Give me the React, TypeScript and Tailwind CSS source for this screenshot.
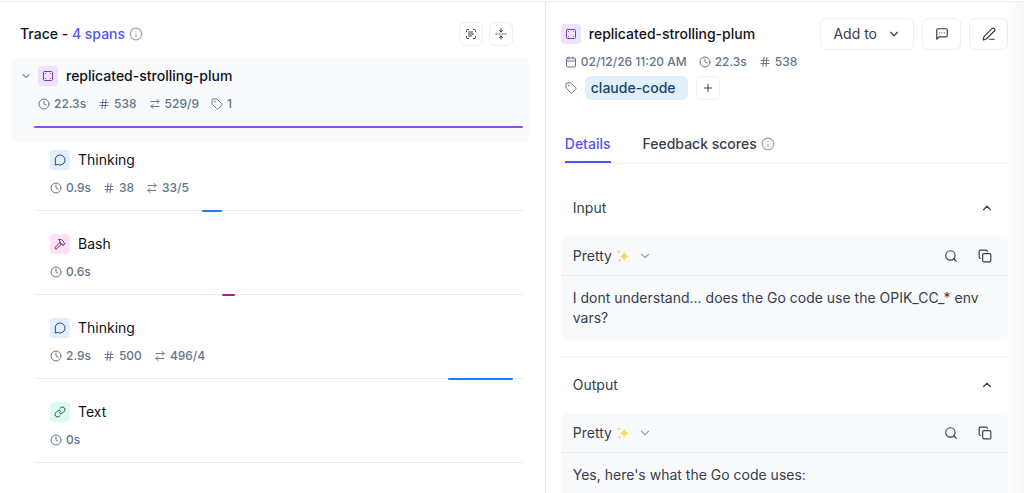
import React from 'react';
import {
    ArrowRightLeft,
    Calendar,
    ChevronDown,
    ChevronUp,
    Clock,
    Copy,
    FoldVertical,
    Hammer,
    Hash,
    Info,
    InspectionPanel,
    Link,
    LucideIcon,
    MessageCircle,
    PenLine,
    Plus,
    ScanText,
    Search,
    Tag,
} from 'lucide-react';

type SpanType = 'trace' | 'thinking' | 'tool' | 'text';

interface Span {
    id: number;
    name: string;
    type: SpanType;
    duration: string;
    tokens?: string;
    usage?: string;
    tags?: string;
    // position on the timeline, in percent
    start: number;
    width: number;
}

const SPANS: Span[] = [
    { id: 1, name: 'replicated-strolling-plum', type: 'trace', duration: '22.3s', tokens: '538', usage: '529/9', tags: '1', start: 0, width: 100 },
    { id: 2, name: 'Thinking', type: 'thinking', duration: '0.9s', tokens: '38', usage: '33/5', start: 34.4, width: 4.1 },
    { id: 3, name: 'Bash', type: 'tool', duration: '0.6s', start: 38.5, width: 2.6 },
    { id: 4, name: 'Thinking', type: 'thinking', duration: '2.9s', tokens: '500', usage: '496/4', start: 84.8, width: 13.2 },
    { id: 5, name: 'Text', type: 'text', duration: '0s', start: 0, width: 0 },
];

const TYPE_STYLES: Record<SpanType, { icon: LucideIcon; chip: string; bar: string }> = {
    trace: { icon: InspectionPanel, chip: 'bg-[#efe2fd] text-[#6d3fb0]', bar: 'bg-[#8b4ff5]' },
    thinking: { icon: MessageCircle, chip: 'bg-[#e2effd] text-[#1e4482]', bar: 'bg-[#1a80f0]' },
    tool: { icon: Hammer, chip: 'bg-[#fde2f6] text-[#72275b]', bar: 'bg-[#bf0fa0]' },
    text: { icon: Link, chip: 'bg-[#dafbf0] text-[#295747]', bar: 'bg-[#12a678]' },
};

const TypeChip: React.FC<{ type: SpanType }> = ({ type }) => {
    const { icon: Icon, chip } = TYPE_STYLES[type];
    return (
        <span className={`flex size-5 shrink-0 items-center justify-center rounded ${chip}`}>
            <Icon className="size-3" />
        </span>
    );
};

const Meta: React.FC<{ icon: LucideIcon; children: React.ReactNode }> = ({ icon: Icon, children }) => (
    <span className="flex items-center gap-1 whitespace-nowrap text-xs leading-4 font-medium text-[#64748b]">
        <Icon className="size-3 shrink-0" />
        {children}
    </span>
);

const SpanRow: React.FC<{ span: Span }> = ({ span }) => {
    const isRoot = span.type === 'trace';
    return (
        <li className={`rounded-md pt-2 pr-1.5 pb-3.5 ${isRoot ? 'bg-[#f8fafc]' : ''}`}>
            <div className={`flex h-5 items-center ${isRoot ? 'pl-2' : 'pl-[38px]'}`}>
                {isRoot && (
                    <button aria-label="Collapse" className="mr-1.5 flex w-3 text-[#373d4d]">
                        <ChevronDown className="size-3" />
                    </button>
                )}
                <TypeChip type={span.type} />
                <span className={`ml-2 text-sm text-[#111318] ${isRoot ? 'font-medium' : ''}`}>{span.name}</span>
            </div>
            <div className={`mt-2.5 flex h-4 items-center gap-3 ${isRoot ? 'pl-[26px]' : 'pl-[38px]'}`}>
                <Meta icon={Clock}>{span.duration}</Meta>
                {span.tokens && <Meta icon={Hash}>{span.tokens}</Meta>}
                {span.usage && <Meta icon={ArrowRightLeft}>{span.usage}</Meta>}
                {span.tags && <Meta icon={Tag}>{span.tags}</Meta>}
            </div>
            <div className="mt-3.5 ml-[22px] h-0.5 border-t border-[#e6eaf3]">
                <div
                    className={`-mt-px h-0.5 rounded-full ${TYPE_STYLES[span.type].bar}`}
                    style={{ marginLeft: `${span.start}%`, width: `${span.width}%` }}
                />
            </div>
        </li>
    );
};

const CommentIcon = () => (
    <svg className="size-3.5" viewBox="0 0 24 24" fill="none" stroke="currentColor" strokeWidth="2" strokeLinecap="round" strokeLinejoin="round">
        <path d="M21 15a2 2 0 0 1-2 2H7l-4 4V5a2 2 0 0 1 2-2h14a2 2 0 0 1 2 2z" />
        <path d="M8 10h.01M12 10h.01M16 10h.01" />
    </svg>
);

const SparklesIcon = () => (
    <svg className="size-3.5" viewBox="0 0 24 24" fill="#fcd560">
        <path d="M14 3c.9 6 2.8 8.100 9 9.500-6.200 1.400-8.100 3.500-9 9.500-.9-6-2.800-8.100-8-9.500 5.200-1.400 7.100-3.500 8-9.500z" />
        <path d="M4.500 1c.4 2.600 1.200 3.500 3.800 4-2.600.5-3.400 1.400-3.800 4-.4-2.600-1.200-3.500-3.800-4 2.600-.5 3.400-1.400 3.800-4z" />
        <path d="M6 16c.4 2.300 1.100 3.100 3.300 3.500-2.200.4-2.900 1.200-3.300 3.500-.4-2.300-1.100-3.100-3.300-3.500 2.200-.4 2.900-1.200 3.300-3.500z" />
    </svg>
);

interface IconButtonProps {
    label: string;
    className: string;
    children: React.ReactNode;
}

const IconButton: React.FC<IconButtonProps> = ({ label, className, children }) => (
    <button
        aria-label={label}
        className={`flex shrink-0 items-center justify-center rounded-md border border-[#eceff7] text-[#373d4d] ${className}`}
    >
        {children}
    </button>
);

const Section: React.FC<{ title: string; children: React.ReactNode }> = ({ title, children }) => (
    <section className="border-b border-[#eff2f6] pb-4">
        <h3>
            <button aria-expanded="true" className="flex h-14 w-full items-center justify-between pr-3.5 pl-3 text-sm">
                {title}
                <ChevronUp className="size-3.5" />
            </button>
        </h3>
        <div className="rounded-md bg-[#f8fafc]">
            <div className="flex h-10 items-center justify-between border-b border-[#eaeef4] pr-4 pl-3">
                <button className="flex items-center gap-1 text-sm">
                    Pretty
                    <SparklesIcon />
                    <ChevronDown className="ml-1 size-3.5 text-[#94a3b8]" />
                </button>
                <div className="flex gap-5">
                    <button aria-label="Search"><Search className="size-3.5" /></button>
                    <button aria-label="Copy"><Copy className="size-3.5" /></button>
                </div>
            </div>
            <p className="px-3 py-3 text-sm">{children}</p>
        </div>
    </section>
);

const TracePanel = () => (
    <section className="w-[53.3%] shrink-0 border-r border-[#e5e8f3] pt-5 pr-4 pl-3">
        <header className="mb-3 flex h-6 items-center justify-between pr-4 pl-2">
            <h2 className="flex items-center text-sm font-medium text-[#111318]">
                Trace -&nbsp;<span className="text-[#5155f5]">4 spans</span>
                <Info className="ml-1 size-3.5 text-[#94a3b8]" />
            </h2>
            <div className="flex gap-1.5">
                <IconButton label="Show details" className="size-6"><ScanText className="size-3" /></IconButton>
                <IconButton label="Collapse all" className="size-6"><FoldVertical className="size-3" /></IconButton>
            </div>
        </header>
        <ul>
            {SPANS.map((span) => (
                <SpanRow key={span.id} span={span} />
            ))}
        </ul>
    </section>
);

const DetailsPanel = () => (
    <section className="min-w-0 flex-1 pt-4 pr-4 pl-[15px]">
        <header className="flex h-8 items-center gap-2">
            <TypeChip type="trace" />
            <h2 className="flex-1 truncate text-sm font-medium text-[#111318]">replicated-strolling-plum</h2>
            <button className="flex h-8 items-center gap-2.5 rounded-md border border-[#eceff7] px-3 text-sm">
                Add to
                <ChevronDown className="size-3.5" />
            </button>
            <IconButton label="Comments" className="h-8 w-[39px]"><CommentIcon /></IconButton>
            <IconButton label="Annotate" className="h-8 w-[39px]"><PenLine className="size-3.5" /></IconButton>
        </header>
        <div className="mt-1 flex h-4 items-center gap-3 pl-1">
            <Meta icon={Calendar}>02/12/26 11:20 AM</Meta>
            <Meta icon={Clock}>22.3s</Meta>
            <Meta icon={Hash}>538</Meta>
        </div>
        <div className="mt-1.5 flex h-6 items-center gap-2 pl-1">
            <Tag className="size-3 text-[#64748b]" />
            <span className="flex h-6 items-center rounded-md bg-[#e2effd] pr-3 pl-1.5 text-sm font-medium text-[#19426b]">claude-code</span>
            <IconButton label="Add tag" className="size-6"><Plus className="size-3" /></IconButton>
        </div>
        <div role="tablist" className="mt-6 flex h-10 gap-8 border-b border-[#eff2f6] pl-1 text-sm font-medium">
            <button role="tab" aria-selected="true" className="border-b-2 border-[#5155f5] pt-0.5 text-[#5155f5]">Details</button>
            <button role="tab" aria-selected="false" className="flex items-center gap-1">
                Feedback scores
                <Info className="size-3.5 text-[#94a3b8]" />
            </button>
        </div>
        <div className="mt-4">
            <Section title="Input">I dont understand... does the Go code use the OPIK_CC_* env vars?</Section>
            <Section title="Output">Yes, here's what the Go code uses:</Section>
        </div>
    </section>
);

const App = () => (
    <div className="h-screen overflow-hidden bg-white pt-px font-['Inter','Liberation_Sans',sans-serif] text-[#373d4d]">
        <main className="relative flex h-full border-t border-[#edf1f5]">
            <TracePanel />
            <DetailsPanel />
            <div className="pointer-events-none absolute inset-y-0 right-0 w-5 bg-gradient-to-r from-transparent to-black/3" />
        </main>
    </div>
);

export default App;
